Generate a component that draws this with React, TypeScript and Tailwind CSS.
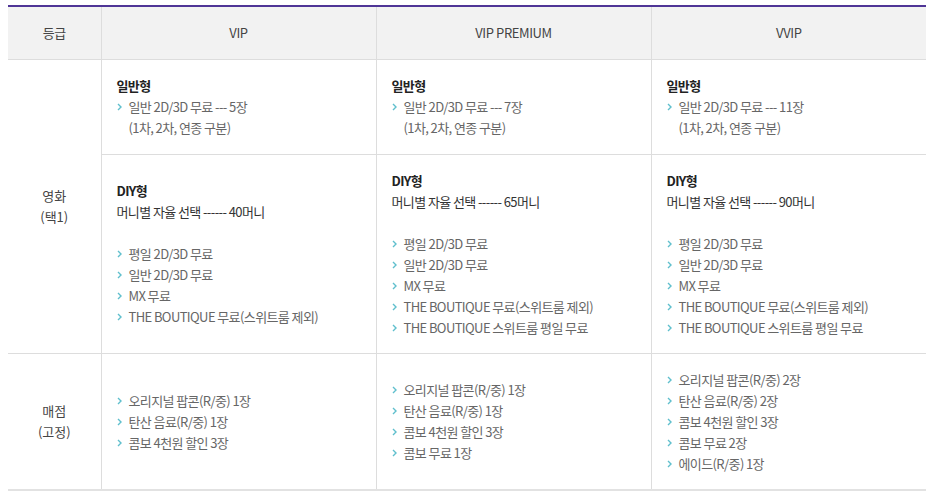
import React from 'react';

type Block = {
  title?: string;
  sub?: string;
  gap?: boolean;
  items: string[][];
};

const Chevron: React.FC = () => (
  <svg className="mt-[7px] h-[8px] w-[5px] shrink-0" viewBox="0 0 5 8" fill="none">
    <path d="M1 1l3 3-3 3" stroke="#5fbfcd" strokeWidth="1.4" />
  </svg>
);

const Items: React.FC<{ items: string[][] }> = ({ items }) => (
  <ul>
    {items.map((lines, i) => (
      <li key={i} className="flex gap-[7px]">
        <Chevron />
        <div>
          {lines.map((l, j) => (
            <div key={j}>{l}</div>
          ))}
        </div>
      </li>
    ))}
  </ul>
);

const Cell: React.FC<{ block: Block }> = ({ block }) => (
  <div className="px-[15px] text-[13px] leading-[21px] tracking-[-0.6px] text-[#666]">
    {block.title && <div className="font-bold text-[#222]">{block.title}</div>}
    {block.sub && <div className="text-[#333]">{block.sub}</div>}
    {block.gap && <div className="h-[21px]" />}
    <Items items={block.items} />
  </div>
);

const general = (n: string): Block => ({
  title: '일반형',
  items: [[`일반 2D/3D 무료 --- ${n}장`, '(1차, 2차, 연종 구분)']],
});

const diy = (money: string, suite: boolean): Block => ({
  title: 'DIY형',
  sub: `머니별 자율 선택 ------ ${money}머니`,
  gap: true,
  items: [
    ['평일 2D/3D 무료'],
    ['일반 2D/3D 무료'],
    ['MX 무료'],
    ['THE BOUTIQUE 무료(스위트룸 제외)'],
    ...(suite ? [['THE BOUTIQUE 스위트룸 평일 무료']] : []),
  ],
});

const snack: Block[] = [
  { items: [['오리지널 팝콘(R/중) 1장'], ['탄산 음료(R/중) 1장'], ['콤보 4천원 할인 3장']] },
  {
    items: [['오리지널 팝콘(R/중) 1장'], ['탄산 음료(R/중) 1장'], ['콤보 4천원 할인 3장'], ['콤보 무료 1장']],
  },
  {
    items: [
      ['오리지널 팝콘(R/중) 2장'],
      ['탄산 음료(R/중) 2장'],
      ['콤보 4천원 할인 3장'],
      ['콤보 무료 2장'],
      ['에이드(R/중) 1장'],
    ],
  },
];

const App: React.FC = () => {
  const td = 'border border-[#dddddd] align-middle p-0';
  return (
    <div
      className="bg-white pl-[8px] pt-[5px]"
      style={{ fontFamily: '"Noto Sans CJK KR", "Noto Sans", sans-serif' }}
    >
      <table className="w-[918px] table-fixed border-collapse border-t-2 border-t-[#4f3596] border-b-2 border-b-[#e2e2e2]">
        <colgroup>
          <col className="w-[93px]" />
          <col className="w-[275px]" />
          <col className="w-[275px]" />
          <col className="w-[275px]" />
        </colgroup>
        <thead>
          <tr className="h-[53px] bg-[#f2f2f2] text-[13px] tracking-[-0.4px] text-[#444]">
            <th className="border-b border-r border-[#dddddd] font-normal">등급</th>
            <th className="border border-t-0 border-[#dddddd] font-normal">VIP</th>
            <th className="border border-t-0 border-[#dddddd] font-normal">VIP PREMIUM</th>
            <th className="border-b border-l border-[#dddddd] font-normal">VVIP</th>
          </tr>
        </thead>
        <tbody>
          <tr className="h-[95px]">
            <td rowSpan={2} className="border-b border-r border-[#dddddd] text-center text-[13px] leading-[21px] text-[#444]">
              영화
              <br />
              (택1)
            </td>
            <td className={td}>
              <Cell block={general('5')} />
            </td>
            <td className={td}>
              <Cell block={general('7')} />
            </td>
            <td className={`${td} border-r-0`}>
              <Cell block={general('11')} />
            </td>
          </tr>
          <tr className="h-[199px]">
            <td className={td}>
              <Cell block={diy('40', false)} />
            </td>
            <td className={td}>
              <Cell block={diy('65', true)} />
            </td>
            <td className={`${td} border-r-0`}>
              <Cell block={diy('90', true)} />
            </td>
          </tr>
          <tr className="h-[137px]">
            <td className="border-r border-[#dddddd] text-center text-[13px] leading-[21px] text-[#444]">
              매점
              <br />
              (고정)
            </td>
            {snack.map((b, i) => (
              <td key={i} className={`${td} border-b-0 ${i === 2 ? 'border-r-0' : ''}`}>
                <Cell block={b} />
              </td>
            ))}
          </tr>
        </tbody>
      </table>
    </div>
  );
};

export default App;
